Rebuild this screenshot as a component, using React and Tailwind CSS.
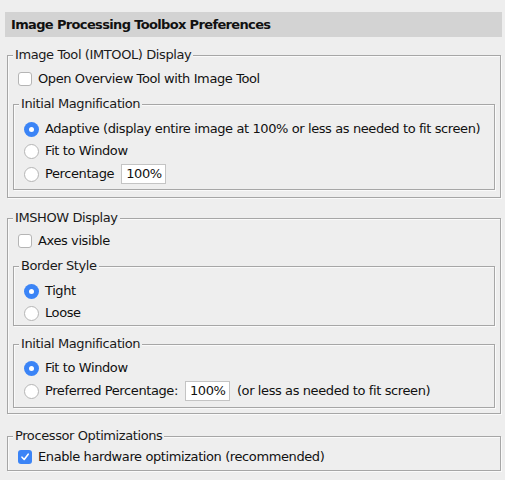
const font = { fontFamily: '"DejaVu Sans", "Liberation Sans", sans-serif' };

const Checkbox = ({ checked }) =>
  checked ? (
    <span className="flex size-[14px] shrink-0 items-center justify-center rounded-[3px] bg-[#3b84f6]">
      <svg width="10" height="10" viewBox="0 0 10 10">
        <path d="M2 5.2 L4.2 7.5 L8.2 2.2" fill="none" stroke="white" strokeWidth="1.6" strokeLinecap="round" strokeLinejoin="round" />
      </svg>
    </span>
  ) : (
    <span className="block size-[14px] shrink-0 rounded-[3px] border border-[#b5b5b5] bg-white" />
  );

const Radio = ({ checked }) =>
  checked ? (
    <span className="flex size-[15px] shrink-0 items-center justify-center rounded-full bg-[#3b84f6]">
      <span className="block size-[5px] rounded-full bg-white" />
    </span>
  ) : (
    <span className="block size-[15px] shrink-0 rounded-full border border-[#b5b5b5] bg-white" />
  );

const Group = ({ title, className = '', children }) => (
  <fieldset
    className={`border border-[#a6a6a6] px-[5px] shadow-[1px_1px_0_#fafafa,inset_1px_1px_0_#fafafa] ${className}`}
  >
    <legend className="bg-[#eeeeee] px-[2px] text-[13px] leading-[16px] text-[#1a1a1a]">{title}</legend>
    {children}
  </fieldset>
);

const CheckRow = ({ checked, label }) => (
  <div className="flex h-[22px] items-center gap-[6px] whitespace-nowrap pl-[5px]">
    <Checkbox checked={checked} />
    <span>{label}</span>
  </div>
);

const RadioRow = ({ checked, label, children, tall }) => (
  <div className={`flex items-center gap-[6px] whitespace-nowrap pl-[5px] ${tall ? 'h-[24px]' : 'h-[22px]'}`}>
    <Radio checked={checked} />
    <span>{label}</span>
    {children}
  </div>
);

const Field = ({ value }) => (
  <span className="ml-[1px] flex h-[20px] w-[45px] items-center border border-[#c4c4c4] bg-white px-[4px] text-[13px]">
    {value}
  </span>
);

export default function App() {
  return (
    <div style={font} className="h-[480px] w-[505px] overflow-hidden bg-[#eeeeee] pl-[5px] pr-[3px] pt-[12px] text-[13px] tracking-[-0.4px] text-[#111111]">
      <div className="flex h-[25px] items-center bg-[#d3d3d3] pl-[6px] text-[13px] font-bold tracking-[-0.65px] text-[#111111]">
        Image Processing Toolbox Preferences
      </div>

      <div className="ml-[2px] mr-[1px]">
        <Group title="Image Tool (IMTOOL) Display" className="mt-[10px] pb-[7px]">
          <div className="pt-[5px]">
            <CheckRow label="Open Overview Tool with Image Tool" />
          </div>
          <Group title="Initial Magnification" className="mt-[6px] pb-[3px]">
            <div className="pt-[6px]">
              <RadioRow checked label="Adaptive (display entire image at 100% or less as needed to fit screen)" />
              <RadioRow label="Fit to Window" />
              <RadioRow label="Percentage" tall>
                <Field value="100%" />
              </RadioRow>
            </div>
          </Group>
        </Group>

        <Group title="IMSHOW Display" className="mt-[12px] pb-[5px]">
          <div className="pt-[4px]">
            <CheckRow label="Axes visible" />
          </div>
          <Group title="Border Style" className="mt-[6px] pb-[1px]">
            <div className="pt-[6px]">
              <RadioRow checked label="Tight" />
              <RadioRow label="Loose" />
            </div>
          </Group>
          <Group title="Initial Magnification" className="mt-[10px] pb-[4px]">
            <div className="pt-[5px]">
              <RadioRow checked label="Fit to Window" />
              <RadioRow label="Preferred Percentage:" tall>
                <Field value="100%" />
                <span className="ml-[1px]">(or less as needed to fit screen)</span>
              </RadioRow>
            </div>
          </Group>
        </Group>

        <Group title="Processor Optimizations" className="mt-[14px] pb-[2px]">
          <div className="pt-[2px]">
            <CheckRow checked label="Enable hardware optimization (recommended)" />
          </div>
        </Group>
      </div>
    </div>
  );
}
